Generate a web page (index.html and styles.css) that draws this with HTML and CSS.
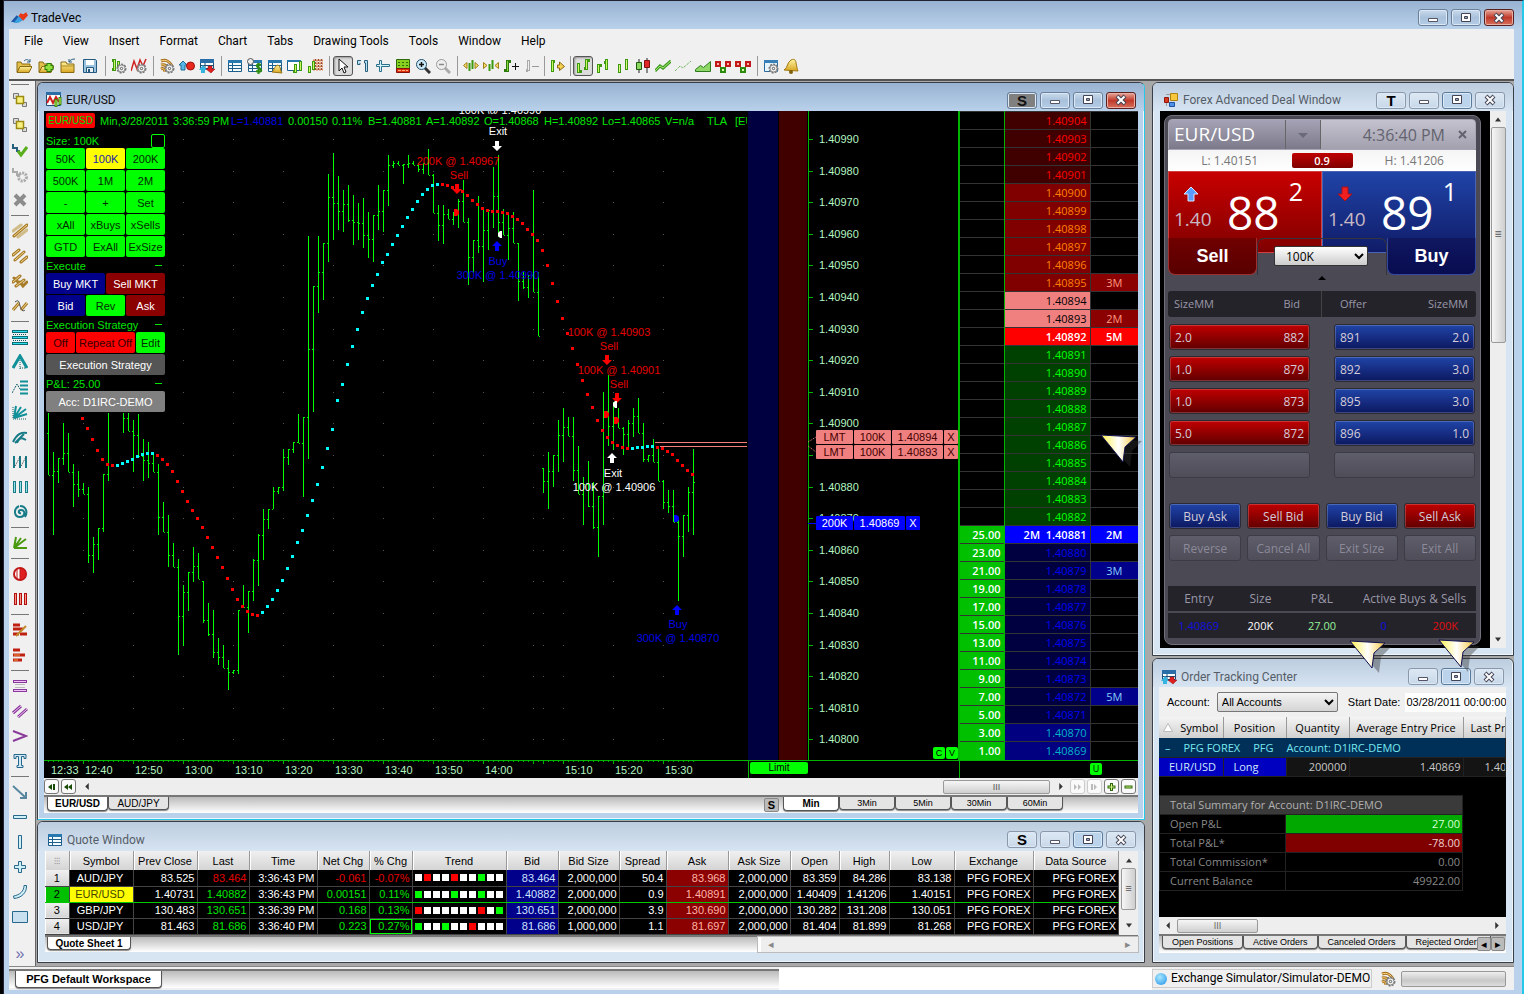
FILE: index.html
```
<!DOCTYPE html>
<html lang="en">
<head>
  <meta charset="UTF-8">
  <meta name="viewport" content="width=device-width, initial-scale=1">
  <title>TradeVec</title>
  <link rel="stylesheet" href="styles.css">
</head>
<body>

<svg class="defs" aria-hidden="true">
  <defs>
    <linearGradient id="gold" x1="0" y1="0" x2="0" y2="1"><stop offset="0" stop-color="#fdf3a0"/><stop offset="1" stop-color="#d9a520"/></linearGradient>
    <linearGradient id="cream" x1="0" y1="0" x2="1" y2="0"><stop offset="0" stop-color="#fff04a"/><stop offset=".5" stop-color="#fff"/><stop offset="1" stop-color="#f5c842"/></linearGradient>
  </defs>
  <symbol id="gear" viewBox="0 0 16 16"><circle cx="10.500" cy="10.500" r="4" fill="#f4f4f4" stroke="#777" stroke-width="2" stroke-dasharray="2 1"/><circle cx="10.500" cy="10.500" r="3.500" fill="#f4f4f4" stroke="#888"/><circle cx="10.500" cy="10.500" r="1.200" fill="#fff" stroke="#555"/></symbol>
  <symbol id="bar2" viewBox="0 0 16 16"><path d="M2 6.500h3M3.500 5v10M3.500 13.500H7M9 10.500h3M11.500 1v11M11.500 2.500H15" stroke="#3d9a10" stroke-width="3" fill="none"/><path d="M3.500 6v8M11.500 2v9" stroke="#c8f860" fill="none"/></symbol>
  <symbol id="sheet" viewBox="0 0 16 16"><path d="M1.500 2.500h13v11h-13z" fill="#f4fbff" stroke="#1d5f8a"/><path d="M1 2h14v3H1z" fill="#2878b0"/><path d="M2 7.500h12M2 10.500h12M5.500 5v8" stroke="#1d5f8a"/></symbol>
  <symbol id="folder" viewBox="0 0 16 16"><path d="M1 14V4h4l1 2h8v2" fill="#e2c04a" stroke="#8a6a12"/><path d="M1 14.500L4 8.500h12l-3 6z" fill="url(#gold)" stroke="#8a6a12"/></symbol>
  <symbol id="i-open" viewBox="0 0 16 16"><use href="#folder"/><path d="M8 3c2-2 4-2 6 1M14 1v3h-3" fill="none" stroke="#2a6080"/></symbol>
  <symbol id="i-add" viewBox="0 0 16 16"><use href="#folder"/><path d="M11 5v9M6.500 9.500h9" stroke="#2c7a0c" stroke-width="5"/><path d="M11 6v7M7.500 9.500h7" stroke="#8fe03c" stroke-width="3"/></symbol>
  <symbol id="i-close" viewBox="0 0 16 16"><path d="M1 4h5l1 2h7v8.500H1z" fill="url(#gold)" stroke="#8a6a12"/><path d="M1 8h13" stroke="#b08a20"/><path d="M15 1c-3 0-5 1-6 3M9 1v3h3" fill="none" stroke="#2a6080"/></symbol>
  <symbol id="i-save" viewBox="0 0 16 16"><path d="M1.500 1.500h12l1 1v12h-13z" fill="#9cc4de" stroke="#255a80"/><path d="M4 2h8v5H4z" fill="#fff"/><path d="M4.500 9.500h7v5h-7z" fill="#e8eef2" stroke="#255a80"/><path d="M6 11h2v3H6z" fill="#255a80"/></symbol>
  <symbol id="i-bargear" viewBox="0 0 16 16"><path d="M1 2.500h2M3.500 1v12M1 11.500h2M7.500 3v6" stroke="#3d9a10" stroke-width="3"/><path d="M3.500 2v10M7.500 4v5" stroke="#c8f860"/><use href="#gear"/></symbol>
  <symbol id="i-wavegear" viewBox="0 0 16 16"><path d="M0 13L3 3l3 8 3-9 3 6 3-7" fill="none" stroke="#d02020" stroke-width="1.500"/><use href="#gear"/></symbol>
  <symbol id="i-feed" viewBox="0 0 16 16"><path d="M2 3c5-2 9 1 11 5M2 7c4-1 6 1 7 4M2 11c2-1 4 0 4 3" fill="none" stroke="#a87020" stroke-width="3"/><path d="M2 3c5-2 9 1 11 5M2 7c4-1 6 1 7 4M2 11c2-1 4 0 4 3" fill="none" stroke="#fcd880"/><use href="#gear"/></symbol>
  <symbol id="i-updot" viewBox="0 0 16 16"><path d="M0 7l4-4 4 4H6v5H2V7z" fill="#59b8e8" stroke="#1a6a9a"/><circle cx="11.500" cy="8" r="4" fill="#e8281c" stroke="#9a1010"/></symbol>
  <symbol id="i-orders" viewBox="0 0 16 16"><path d="M1.500 1.500h13v9h-13z" fill="#fff" stroke="#1d4f7a"/><path d="M1 1h14v4H1z" fill="#2a6ea8"/><path d="M6 5v5M2 7.500h12" stroke="#1d4f7a"/><path d="M0 12l4-5 4 5H6v3H2v-3z" fill="#35b4e0"/><path d="M7 11h2V8h4v3h3l-4 4z" fill="#e02020" stroke="#901010" stroke-width=".5"/></symbol>
  <symbol id="i-dollar" viewBox="0 0 16 16"><use href="#sheet"/><circle cx="3.500" cy="3.500" r="3" fill="#eee" stroke="#555"/><path d="M14 7c-4-2-6 1-2 3s2 5-3 3M11.500 5v11" fill="none" stroke="#2c8a10" stroke-width="2"/></symbol>
  <symbol id="i-sheetbell" viewBox="0 0 16 16"><use href="#sheet"/><path d="M5 14c2-1 2-6 6-7 3 1 2 6 4 8z" fill="url(#gold)" stroke="#9a7410"/></symbol>
  <symbol id="i-sheetbar" viewBox="0 0 16 16"><path d="M.500 2.500h13v10H.500z" fill="#fff" stroke="#1d5f8a"/><path d="M0 2h14v2H0z" fill="#2878b0"/><path d="M8.500 6v9M13.500 3v10M6 13.500h2" stroke="#3d9a10" stroke-width="3"/><path d="M8.500 7v7M13.500 4v8" stroke="#c8f860"/></symbol>
  <symbol id="i-heat" viewBox="0 0 16 16"><path d="M6 2.500h10M6 5.500h10M6 8.500h10M6 11.500h10" stroke="#d88a58" stroke-width="2" stroke-dasharray="2 1"/><path d="M8.500 1v12M11.500 1v12M14.500 1v12" stroke="#9a4a3a" stroke-dasharray="2 1"/><path d="M2.500 8v7M6.500 3v9" stroke="#3d9a10" stroke-width="3"/><path d="M2.500 9v5M6.500 4v7" stroke="#c8f860"/></symbol>
  <symbol id="i-cursor" viewBox="0 0 16 16"><path d="M4 1v12l3-3 2 5 2-1-2-5h4z" fill="#fff" stroke="#111"/></symbol>
  <symbol id="i-cursorg" viewBox="0 0 16 16"><path d="M6 2.500H2.500v4H5V5M9.500 2.500h3v11h-2V5h-1z" fill="#b9dff0" stroke="#28607c"/></symbol>
  <symbol id="i-tcross" viewBox="0 0 16 16"><path d="M4.500 2.500h2v4h8v2h-8v5h-2v-5h-3v-2h3z" fill="#d8f0f8" stroke="#28708c"/></symbol>
  <symbol id="i-keypad" viewBox="0 0 16 16"><path d="M1.500 1.500h13v9h-13z" fill="#8ad020" stroke="#2c6a08"/><path d="M3 4.500h10M3 7.500h10" stroke="#2c6a08" stroke-dasharray="2 2"/><path d="M1.500 10.500h13v4h-13z" fill="#e03010" stroke="#801008"/><path d="M3 12.500h10" stroke="#ffb070" stroke-dasharray="3 1"/></symbol>
  <symbol id="i-zoomin" viewBox="0 0 16 16"><path d="M10 10l5 5" stroke="#333" stroke-width="3"/><circle cx="6.500" cy="6.500" r="5" fill="#cdeaf8" stroke="#22506a"/><path d="M4 6.500h5M6.500 4v5" stroke="#111" stroke-width="1.500"/></symbol>
  <symbol id="i-zoomout" viewBox="0 0 16 16"><path d="M10 10l5 5" stroke="#aaa" stroke-width="3"/><circle cx="6.500" cy="6.500" r="5" fill="#eee" stroke="#999"/><path d="M4 6.500h5" stroke="#888" stroke-width="1.500"/></symbol>
  <symbol id="i-widen" viewBox="0 0 16 16"><path d="M4 4.500v6l-3.500-3zM12 4.500v6l3.500-3z" fill="#f4d868" stroke="#a08018"/><path d="M6.500 5v8M9.500 2v9" stroke="#3d9a10" stroke-width="2"/></symbol>
  <symbol id="i-narrow" viewBox="0 0 16 16"><path d="M.500 4.500v6L4 7.500zM15.500 4.500v6L12 7.500z" fill="#f4d868" stroke="#a08018"/><path d="M6.500 6v7M9.500 2v9" stroke="#3d9a10" stroke-width="2"/></symbol>
  <symbol id="i-barplus" viewBox="0 0 16 16"><path d="M4.500 2v12M1 12.500h3M4 3.500h4" stroke="#2c7a0c" stroke-width="3"/><path d="M4.500 3v10" stroke="#8ad840"/><path d="M9 8.500h7M12.500 5v7" stroke="#111"/></symbol>
  <symbol id="i-barminus" viewBox="0 0 16 16"><path d="M5.500 2v11M3 12.500h2" stroke="#aaa" stroke-width="3"/><path d="M5.500 3v9" stroke="#eee"/><path d="M9 8.500h7" stroke="#999"/></symbol>
  <symbol id="i-shift" viewBox="0 0 16 16"><path d="M3.500 2v12M4 3.500h2" stroke="#3d9a10" stroke-width="3"/><path d="M3.500 3v10" stroke="#c8f860"/><path d="M8.500 7h2V4l5 4.500-5 4V10h-2z" fill="#f4d050" stroke="#8a6a12"/></symbol>
  <symbol id="i-bar1" viewBox="0 0 16 16"><path d="M3.500 6v9M11.500 1v11M3.500 7.500H7M9 4.500h2" stroke="#3d9a10" stroke-width="3"/><path d="M3.500 7v7M11.500 2v9" stroke="#c8f860"/></symbol>
  <symbol id="i-hl" viewBox="0 0 16 16"><path d="M4.500 6v9M11.500 1v11" stroke="#3d9a10" stroke-width="3"/><path d="M4.500 7v7M11.500 2v9" stroke="#d8f880"/></symbol>
  <symbol id="i-candle" viewBox="0 0 16 16"><path d="M4 1v14M12 0v15" stroke="#222"/><path d="M1.500 4.500h5v7h-5z" fill="#8ad860" stroke="#1c5a0c"/><path d="M9.500 2.500h5v7h-5z" fill="#e02828" stroke="#801010"/></symbol>
  <symbol id="i-line" viewBox="0 0 16 16"><path d="M0 13l5-5 3 2 8-7" fill="none" stroke="#3d9a20" stroke-width="3"/><path d="M0 13l5-5 3 2 8-7" fill="none" stroke="#a8e870"/></symbol>
  <symbol id="i-dots" viewBox="0 0 16 16"><path d="M0 13l5-5 3 2 8-7" fill="none" stroke="#3da020" stroke-dasharray="1 1"/></symbol>
  <symbol id="i-area" viewBox="0 0 16 16"><path d="M.500 13.500v-2l5-4 3 2 7-6v10z" fill="#8fd868" stroke="#2c7a1c"/></symbol>
  <symbol id="i-pnf" viewBox="0 0 16 16"><path d="M1 4h4v4H1zM11 4h4v4h-4z" fill="#ffb0a0" stroke="#c01818" stroke-width="2"/><path d="M6 10h4v4H6z" fill="#d0ffb0" stroke="#2c8a0c" stroke-width="2"/></symbol>
  <symbol id="i-wingear" viewBox="0 0 16 16"><path d="M1.500 2.500h13v11h-13z" fill="#e8f4fc" stroke="#28689a"/><path d="M1 2h14v3H1z" fill="#3a80b8"/><use href="#gear"/></symbol>
  <symbol id="i-bell" viewBox="0 0 16 16"><path d="M1 12c4-2 3-8 7-10 4-2 5 1 5 3 1 4 1 6 2 8z" fill="url(#gold)" stroke="#a07810"/><circle cx="8" cy="14" r="2" fill="#806008"/></symbol>
  <symbol id="i-chart" viewBox="0 0 16 16"><path d="M.500.500h14v13H.500z" fill="#fff" stroke="#1d4f7a"/><path d="M0 0h15v3H0z" fill="#2a6ea8"/><path d="M1 11l3-6 3 6 3-6 3 5" fill="none" stroke="#d02020" stroke-width="2"/><path d="M10 7v8M14 5v8" stroke="#3d8a10" stroke-width="3"/><path d="M10 8v6M14 6v6" stroke="#b6f04a"/></symbol>
  <symbol id="i-form" viewBox="0 0 16 16"><path d="M7.500 1.500h7v7h-7z" fill="#f8c83c" stroke="#b08010"/><path d="M1.500 5.500h4v5h-4z" fill="#d83820" stroke="#901808"/><path d="M6.500 10.500h5v4h-5z" fill="#5090e8" stroke="#2050a0"/><path d="M3 2.500h4M3.500 11v3" stroke="#999"/></symbol>
  <symbol id="l-pos" viewBox="0 0 16 16"><path d="M1.500 1.500h5v5h-5zM10.500 10.500h4v4h-4z" fill="#ddd" stroke="#777"/><path d="M4.500 4.500h7v7h-7z" fill="#f8f080" stroke="#9a8a10" stroke-width="1.500"/></symbol>
  <symbol id="l-check" viewBox="0 0 16 16"><path d="M1 2v4h4v3h3" fill="none" stroke="#286080" stroke-width="2"/><path d="M6 9l3 4 6-8" fill="none" stroke="#5aae1c" stroke-width="3"/></symbol>
  <symbol id="l-ggear" viewBox="0 0 16 16"><path d="M1 1v4h4v3h3" fill="none" stroke="#aaa" stroke-width="2"/><circle cx="10.500" cy="10" r="4" fill="none" stroke="#aaa" stroke-width="3" stroke-dasharray="2 1"/></symbol>
  <symbol id="l-x" viewBox="0 0 16 16"><path d="M3 3l10 10M13 3L3 13" stroke="#8c8c8c" stroke-width="4"/></symbol>
  <symbol id="l-ray" viewBox="0 0 16 16"><path d="M1 8l8-6M6 14l9-7" stroke="#d0bc88" stroke-width="3" stroke-linecap="round"/><path d="M2 13L15 2" stroke="#a87c28" stroke-width="3" stroke-linecap="round"/><path d="M2 13L15 2" stroke="#f0d890"/></symbol>
  <symbol id="l-lines" viewBox="0 0 16 16"><path d="M1 7l6-5M3 12L12 4M9 14l6-5" stroke="#a87c28" stroke-width="3" stroke-linecap="round"/><path d="M1 7l6-5M3 12L12 4M9 14l6-5" stroke="#f0d890"/></symbol>
  <symbol id="l-gann" viewBox="0 0 16 16"><path d="M2 5l4 4M1 9l7-6M4 13l8-6M8 9l3 4 4-4" stroke="#a87c28" stroke-width="3" fill="none" stroke-linecap="round"/><path d="M1 9l7-6M4 13l8-6" stroke="#f0d890"/></symbol>
  <symbol id="l-curve" viewBox="0 0 16 16"><path d="M1 12L7 5M9 12l6-7" stroke="#a87c28" stroke-width="3" fill="none"/><path d="M1 12L7 5M9 12l6-7" stroke="#f0d890"/><path d="M3 4c4-3 4 0 5 4s3 6 5 4" stroke="#444" fill="none"/></symbol>
  <symbol id="l-fib" viewBox="0 0 16 16"><path d="M0 2.500h16M0 8.500h16M0 14.500h16" stroke="#0c6c76" stroke-width="3"/><path d="M1 2.500h14M1 8.500h14M1 14.500h14" stroke="#30e0ec"/><path d="M1 5.500h14M1 11.500h14" stroke="#0c5c66" stroke-dasharray="1 1"/></symbol>
  <symbol id="l-peak" viewBox="0 0 16 16"><path d="M1 14L8 2l7 12" fill="none" stroke="#109098" stroke-width="3"/><path d="M8 6v9M8 14h6" stroke="#0c5c66" stroke-dasharray="1 1"/></symbol>
  <symbol id="l-ext" viewBox="0 0 16 16"><path d="M8 2.500h8M8 6.500h8M8 10.500h8M8 14.500h8" stroke="#109098" stroke-width="2"/><path d="M0 14l5-9 3 5" fill="none" stroke="#0c5c66" stroke-dasharray="2 1"/></symbol>
  <symbol id="l-fan" viewBox="0 0 16 16"><path d="M2 14L4 2M2 14L9 3M2 14l12-9M2 14l13-4" stroke="#109098" stroke-width="2"/><path d="M1 3v12h14" fill="none" stroke="#0c5c66" stroke-dasharray="1 1"/></symbol>
  <symbol id="l-arc" viewBox="0 0 16 16"><path d="M1 13C5 5 9 3 15 4M5 14c2-5 4-6 9-3M3 14L12 5" fill="none" stroke="#187c88" stroke-width="2"/></symbol>
  <symbol id="l-vert" viewBox="0 0 16 16"><path d="M2 2v12M8 2v12M14 2v12" stroke="#187c88" stroke-width="2"/><path d="M3 12L8 3M9 12l5-9" stroke="#333" stroke-dasharray="1 1"/></symbol>
  <symbol id="l-cycle" viewBox="0 0 16 16"><path d="M2.500 2v12M8.500 2v12M14.500 2v12" stroke="#187c88" stroke-width="3"/><path d="M2.500 3v10M8.500 3v10M14.500 3v10" stroke="#98e0e8"/></symbol>
  <symbol id="l-spiral" viewBox="0 0 16 16"><path d="M9 9c-3 1-3-3 0-3 5 0 4 7-1 7C2 13 1 5 7 2M8 2c6 0 8 6 5 11" fill="none" stroke="#187c88" stroke-width="2"/></symbol>
  <symbol id="l-gfan" viewBox="0 0 16 16"><path d="M2 13L4 2M2 13L9 3M2 13l12-9M2 13h13" stroke="#4a9a10" stroke-width="2"/></symbol>
  <symbol id="l-rcirc" viewBox="0 0 16 16"><circle cx="8" cy="8" r="6" fill="#fff" stroke="#c01818" stroke-width="2"/><path d="M8 2a6 6 0 010 12zM5 3v10" fill="#e02020" stroke="#c01818"/></symbol>
  <symbol id="l-rbars" viewBox="0 0 16 16"><path d="M3.500 2v12M8.500 2v12M13.500 2v12" stroke="#b01010" stroke-width="3"/><path d="M3.500 3v10M8.500 3v10M13.500 3v10" stroke="#ff9080"/></symbol>
  <symbol id="l-rh1" viewBox="0 0 16 16"><path d="M1 3h7M1 7h10M1 12h6M8 12h7" stroke="#c02010" stroke-width="3"/><path d="M4 14L14 4" stroke="#c08828" stroke-width="2"/></symbol>
  <symbol id="l-rh2" viewBox="0 0 16 16"><path d="M1 3h7M1 8h12M1 13h9" stroke="#c02010" stroke-width="3"/><path d="M2 8h6M2 13h4" stroke="#f0a040"/></symbol>
  <symbol id="l-chan" viewBox="0 0 16 16"><path d="M1 3.500h14M1 12.500h14" stroke="#8a3a9a" stroke-width="3"/><path d="M2 3.500h12M2 12.500h12" stroke="#f0c0f8"/><path d="M3 6.500h10M3 9.500h10" stroke="#bbb"/></symbol>
  <symbol id="l-pchan" viewBox="0 0 16 16"><path d="M1 10l8-7M6 14l9-8" stroke="#8a3a9a" stroke-width="3"/><path d="M1 10l8-7M6 14l9-8" stroke="#f0c0f8"/></symbol>
  <symbol id="l-wedge" viewBox="0 0 16 16"><path d="M1 3l13 5-13 5" fill="none" stroke="#8a3a9a" stroke-width="2"/></symbol>
  <symbol id="l-text" viewBox="0 0 16 16"><path d="M2 1.500h12v4h-2v-2H9.500v9H11v2H5v-2h1.500v-9H4v2H2z" fill="#d0e8f4" stroke="#28688c"/></symbol>
  <symbol id="l-arrow" viewBox="0 0 16 16"><path d="M1 2l12 11M14 8v6H8" fill="none" stroke="#5888a0" stroke-width="2"/></symbol>
  <symbol id="l-hline" viewBox="0 0 16 16"><path d="M1.500 6.500h13v3h-13z" fill="#d0f0f8" stroke="#28688c"/></symbol>
  <symbol id="l-vline" viewBox="0 0 16 16"><path d="M6.500 1.500h3v13h-3z" fill="#d0f0f8" stroke="#28688c"/></symbol>
  <symbol id="l-plus" viewBox="0 0 16 16"><path d="M6.500 2.500h3v4h4v3h-4v4h-3v-4h-4v-3h4z" fill="#d0f0f8" stroke="#28688c"/></symbol>
  <symbol id="l-sweep" viewBox="0 0 16 16"><path d="M12 1.500h2.500C15 9 9 14 2 14.500L1.500 12C8 11 12 7 12 1.500z" fill="#d0f0f8" stroke="#28688c"/></symbol>
  <symbol id="l-rect" viewBox="0 0 16 16"><path d="M.500 2.500h15v11H.500z" fill="#c8e0f0" stroke="#28688c"/></symbol>
  <symbol id="w-min" viewBox="0 0 16 12"><path d="M3.500 6.500h9v3h-9z" fill="#fff" stroke="#556"/></symbol>
  <symbol id="w-max" viewBox="0 0 16 12"><path d="M3.500 1.500h9v8h-9z" fill="#fff" stroke="#445"/><path d="M6.500 4.500h3v2h-3z" fill="#9ab" stroke="#445"/></symbol>
  <symbol id="w-x" viewBox="0 0 16 12"><path d="M4 2l8 8M12 2l-8 8" stroke="#445" stroke-width="4"/><path d="M4.500 2.500l7 7M11.500 2.500l-7 7" stroke="#fff" stroke-width="2"/></symbol>
  <symbol id="pointer" viewBox="0 0 42 38"><path d="M5 4l37 3-10 10-2 16z" fill="#333" opacity=".4"/><path d="M1 1l35 2-11 10-2 15z" fill="url(#cream)" stroke="#101050" stroke-width="1"/></symbol>
</svg>

<div class="app">
  <header class="titlebar">
    <svg class="logo" viewBox="0 0 18 14"><path d="M0 11L6 4l4 3-4 5z" fill="#1c58a8"/><path d="M3 12l6-8 4 5-5 3z" fill="#38a0e0"/><path d="M8 5l2-3 3 1 3-2 2 3-5 6z" fill="#e83818"/></svg>
    <h1>TradeVec</h1>
    <div class="wbtns">
      <button class="wb" aria-label="Minimize"><svg><use href="#w-min"/></svg></button>
      <button class="wb" aria-label="Restore"><svg><use href="#w-max"/></svg></button>
      <button class="wb close" aria-label="Close"><svg><use href="#w-x"/></svg></button>
    </div>
  </header>

  <nav class="menu">
    <a href="#">File</a><a href="#">View</a><a href="#">Insert</a><a href="#">Format</a><a href="#">Chart</a><a href="#">Tabs</a><a href="#">Drawing Tools</a><a href="#">Tools</a><a href="#">Window</a><a href="#">Help</a>
  </nav>

  <div class="toolbar" id="toolbar"></div>

  <div class="main">
    <div class="sidebar" id="sidebar"></div>

    <div class="desk">
      <div class="col">

        <section class="win active">
          <div class="wtitle">
            <svg class="ico"><use href="#i-chart"/></svg><h2>EUR/USD</h2>
            <div class="wbtns">
              <button class="wb s dark">S</button>
              <button class="wb" aria-label="Minimize"><svg><use href="#w-min"/></svg></button>
              <button class="wb" aria-label="Restore"><svg><use href="#w-max"/></svg></button>
              <button class="wb close" aria-label="Close"><svg><use href="#w-x"/></svg></button>
            </div>
          </div>
          <div class="chart">
            <div class="plot">
              <svg id="plot" viewBox="44 111 915 667" preserveAspectRatio="xMinYMin slice">
                <clipPath id="clip"><path d="M44 111h703v667H44z"/></clipPath>
                <g id="grid"></g>
                <g id="bars"></g>
                <g id="avg"></g>
                <path d="M655 442.500h92M660 446.500h87" stroke="#f08080" stroke-width="1"/>
                <g id="marks" class="marks"></g>
                <path d="M748 111h30v649h-30z" fill="#000040"/>
                <path d="M779 111h28v649h-28z" fill="#400000"/>
                <path d="M44 760.500h915M808.500 111v649M748.500 760v18M958.500 111v649" stroke="#00b400"/>
                <path d="M808 442l8-5M808 446l8 6" stroke="#f08080" stroke-dasharray="1 1"/>
                <path d="M808 523.500h8" stroke="#00f"/>
                <g id="axis"></g>
                <g clip-path="url(#clip)">
                  <text class="w" x="500" y="114" text-anchor="middle">100K @ 1.40990</text>
                  <path d="M44 114h703v14H44z" fill="#000"/>
                  <text class="g" y="125"><tspan x="100">Min,3/28/2011</tspan><tspan x="173">3:36:59 PM</tspan><tspan x="231" class="b">L=1.40881</tspan><tspan x="288">0.00150</tspan><tspan x="332">0.11%</tspan><tspan x="368">B=1.40881</tspan><tspan x="426">A=1.40892</tspan><tspan x="484">O=1.40868</tspan><tspan x="544">H=1.40892</tspan><tspan x="602">Lo=1.40865</tspan><tspan x="665">V=n/a</tspan><tspan x="707">TLA</tspan><tspan x="735">[EUR/USD]</tspan></text>
                  <text class="w" x="498" y="135" text-anchor="middle">Exit</text>
                </g>
              </svg>
              <span class="symtag">EUR/USD</span>
              <div class="pad">
                <div class="lab"><label for="lock">Size: 100K</label><input type="checkbox" id="lock"></div>
                <div class="keys">
                  <button>50K</button><button class="on">100K</button><button>200K</button>
                  <button>500K</button><button>1M</button><button>2M</button>
                  <button>-</button><button>+</button><button>Set</button>
                  <button>xAll</button><button>xBuys</button><button>xSells</button>
                  <button>GTD</button><button>ExAll</button><button>ExSize</button>
                </div>
                <div class="lab"><span>Execute</span><i></i></div>
                <div class="keys two"><button class="buy">Buy MKT</button><button class="sell">Sell MKT</button></div>
                <div class="keys"><button class="buy">Bid</button><button>Rev</button><button class="sell">Ask</button></div>
                <div class="lab"><span>Execution Strategy</span><i></i></div>
                <div class="keys strat"><button class="red">Off</button><button class="red">Repeat Off</button><button>Edit</button></div>
                <div class="keys one"><button class="gray">Execution Strategy</button></div>
                <div class="lab"><span>P&amp;L: 25.00</span><i></i></div>
                <div class="keys one"><button class="lgray">Acc: D1IRC-DEMO</button></div>
              </div>
              <div class="orders">
                <div class="order"><span>LMT</span><span>100K</span><span>1.40894</span><button>X</button></div>
                <div class="order"><span>LMT</span><span>100K</span><span>1.40893</span><button>X</button></div>
              </div>
              <div class="order position"><span>200K</span><span>1.40869</span><button>X</button></div>
              <div class="cv"><button>C</button><button>V</button></div>
              <button class="limit">Limit</button>
            </div>
            <div class="dom">
              <table class="ladder"><tbody id="ladder"></tbody></table>
              <div class="domfoot"><button>U</button></div>
            </div>
          </div>
          <div class="hscroll">
            <button class="nav" aria-label="First"><svg viewBox="0 0 9 8"><path d="M5 1v6L1 4zM6 1h2v6H6z" fill="#184a08"/></svg></button><button class="nav" aria-label="Back"><svg viewBox="0 0 9 8"><path d="M4 1v6L0 4zM8 1v6L4 4z" fill="#184a08"/></svg></button>
            <svg class="tri l" viewBox="0 0 6 8"><path d="M5 0v8L1 4z"/></svg>
            <span class="track"></span><span class="thumb">III</span>
            <svg class="tri" viewBox="0 0 6 8"><path d="M1 0v8l4-4z"/></svg>
            <button class="nav off" aria-label="Forward"><svg viewBox="0 0 9 8"><path d="M1 1v6l3-3zM5 1v6l3-3z" fill="#bbb"/></svg></button><button class="nav off" aria-label="Last"><svg viewBox="0 0 9 8"><path d="M1 1h2v6H1zM4 1v6l3-3z" fill="#bbb"/></svg></button><button class="nav" aria-label="Zoom in"><svg viewBox="0 0 9 8"><path d="M4.500 0v8M.500 4h8" stroke="#2c6a08" stroke-width="3"/><path d="M4.500 1v6M1.500 4h6" stroke="#d0f080"/></svg></button><button class="nav" aria-label="Zoom out"><svg viewBox="0 0 9 8"><path d="M.500 4h8" stroke="#2c6a08" stroke-width="3"/><path d="M1.500 4h6" stroke="#d0f080"/></svg></button>
          </div>
          <div class="tabs charttabs">
            <button class="tab cur">EUR/USD</button><button class="tab">AUD/JPY</button>
            <span class="fill"></span>
            <button class="sbtn">S</button>
            <button class="tab cur iv">Min</button><button class="tab iv">3Min</button><button class="tab iv">5Min</button><button class="tab iv">30Min</button><button class="tab iv">60Min</button>
            <span class="end"></span>
          </div>
          <svg class="ptr p1"><use href="#pointer"/></svg>
        </section>

        <section class="win quote">
          <div class="wtitle">
            <svg class="ico"><use href="#sheet"/></svg><h2>Quote Window</h2>
            <div class="wbtns">
              <button class="wb s">S</button>
              <button class="wb" aria-label="Minimize"><svg><use href="#w-min"/></svg></button>
              <button class="wb hot" aria-label="Restore"><svg><use href="#w-max"/></svg></button>
              <button class="wb" aria-label="Close"><svg><use href="#w-x"/></svg></button>
            </div>
          </div>
          <div class="qbody">
            <table class="quotes">
              <colgroup><col class="c24"><col class="c64"><col class="c64"><col class="c52"><col class="c68"><col class="c52"><col class="c43"><col class="c94"><col class="c52"><col class="c61"><col class="c47"><col class="c62"><col class="c62"><col class="c49"><col class="c50"><col class="c65"><col class="c79"><col></colgroup>
              <thead><tr><th class="grip">⁝⁝⁝</th><th>Symbol</th><th>Prev Close</th><th>Last</th><th>Time</th><th>Net Chg</th><th>% Chg</th><th>Trend</th><th>Bid</th><th>Bid Size</th><th>Spread</th><th>Ask</th><th>Ask Size</th><th>Open</th><th>High</th><th>Low</th><th>Exchange</th><th>Data Source</th></tr></thead>
              <tbody id="quotes"></tbody>
            </table>
            <div class="vscroll"><svg class="tri" viewBox="0 0 8 6"><path d="M1 5h6L4 1z"/></svg><span class="vthumb">≡</span><span class="vfill"></span><svg class="tri" viewBox="0 0 8 6"><path d="M1 1h6L4 5z"/></svg></div>
          </div>
          <div class="tabs qtabs">
            <button class="tab cur">Quote Sheet 1</button><span class="fill"></span>
            <div class="qscroll"><span>◂</span><span>▸</span></div>
          </div>
        </section>
      </div>

      <div class="col right">
        <section class="win deal">
          <div class="wtitle">
            <svg class="ico"><use href="#i-form"/></svg><h2>Forex Advanced Deal Window</h2>
            <div class="wbtns">
              <button class="wb s">T</button>
              <button class="wb" aria-label="Minimize"><svg><use href="#w-min"/></svg></button>
              <button class="wb hot" aria-label="Restore"><svg><use href="#w-max"/></svg></button>
              <button class="wb" aria-label="Close"><svg><use href="#w-x"/></svg></button>
            </div>
          </div>
          <div class="dbody">
            <div class="dwrap">
              <div class="dpanel">
                <div class="dhead"><strong>EUR/USD</strong><button class="dd" aria-label="Choose pair"><svg viewBox="0 0 12 7"><path d="M1 1h10L6 6z" fill="#6a6a78"/></svg></button><div class="clock"><time>4:36:40 PM</time><button aria-label="Close pair"><svg viewBox="0 0 9 9"><path d="M1 1l7 7M8 1L1 8" stroke="#63636f" stroke-width="2"/></svg></button></div></div>
                <div class="range"><span>L: 1.40151</span><b>0.9</b><span>H: 1.41206</span></div>
                <div class="tiles">
                  <div class="tile r"><div class="lead"><svg viewBox="0 0 16 16"><path d="M8 1l7 7h-4v7H5V8H1z" fill="#5a9cff" stroke="#d8e8ff"/></svg><span>1.40</span></div><b>88</b><sup>2</sup></div>
                  <div class="tile b"><div class="lead"><svg viewBox="0 0 16 16"><path d="M8 15l7-7h-4V1H5v7H1z" fill="#f02020" stroke="#a01020"/></svg><span>1.40</span></div><b>89</b><sup>1</sup></div>
                </div>
                <div class="act"><button class="bsell">Sell</button><label class="size"><select aria-label="Size"><option>100K</option></select></label><button class="bbuy">Buy</button></div>
                <svg class="fold" viewBox="0 0 8 4"><path d="M0 4h8L4 0z"/></svg>
                <div class="depthhead"><div><span>SizeMM</span><span>Bid</span></div><div><span>Offer</span><span>SizeMM</span></div></div>
                <div class="depth">
                  <button class="r"><span>2.0</span><span>882</span></button><button class="b"><span>891</span><span>2.0</span></button>
                  <button class="r"><span>1.0</span><span>879</span></button><button class="b"><span>892</span><span>3.0</span></button>
                  <button class="r"><span>1.0</span><span>873</span></button><button class="b"><span>895</span><span>3.0</span></button>
                  <button class="r"><span>5.0</span><span>872</span></button><button class="b"><span>896</span><span>1.0</span></button>
                  <button disabled aria-label="No bid"></button><button disabled aria-label="No offer"></button>
                </div>
                <div class="cmds">
                  <button class="b">Buy Ask</button><button class="r">Sell Bid</button><button class="b">Buy Bid</button><button class="r">Sell Ask</button>
                  <button disabled>Reverse</button><button disabled>Cancel All</button><button disabled>Exit Size</button><button disabled>Exit All</button>
                </div>
                <table class="pos">
                  <thead><tr><th>Entry</th><th>Size</th><th>P&amp;L</th><th colspan="2">Active Buys &amp; Sells</th></tr></thead>
                  <tbody><tr><td class="blue">1.40869</td><td class="white">200K</td><td class="lime">27.00</td><td class="blue">0</td><td class="rd">200K</td></tr></tbody>
                </table>
              </div>
            </div>
            <div class="vscroll big"><svg class="tri" viewBox="0 0 8 6"><path d="M1 5h6L4 1z"/></svg><span class="vthumb">≡</span><span class="vfill"></span><svg class="tri" viewBox="0 0 8 6"><path d="M1 1h6L4 5z"/></svg></div>
          </div>
          <svg class="ptr p2"><use href="#pointer"/></svg>
          <svg class="ptr p3"><use href="#pointer"/></svg>
        </section>

        <section class="win otc">
          <div class="wtitle">
            <svg class="ico"><use href="#i-orders"/></svg><h2>Order Tracking Center</h2>
            <div class="wbtns">
              <button class="wb" aria-label="Minimize"><svg><use href="#w-min"/></svg></button>
              <button class="wb hot" aria-label="Restore"><svg><use href="#w-max"/></svg></button>
              <button class="wb" aria-label="Close"><svg><use href="#w-x"/></svg></button>
            </div>
          </div>
          <div class="filter"><label for="acct">Account:</label><select id="acct"><option>All Accounts</option></select><label for="start">Start Date:</label><input id="start" type="text" value="03/28/2011 00:00:00"></div>
          <div class="obody">
            <table class="otable">
              <colgroup><col class="c64"><col class="c63"><col class="c63"><col class="c114"><col></colgroup>
              <thead><tr><th class="sort"><svg viewBox="0 0 10 9"><path d="M.500 8.500h9L5 .500z" fill="#fff" stroke="#bbb"/></svg>Symbol</th><th>Position</th><th>Quantity</th><th>Average Entry Price</th><th class="last">Last Price</th></tr></thead>
              <tbody>
                <tr class="grp"><td colspan="5"><span>–</span><span>PFG FOREX</span><span>PFG</span><span>Account: D1IRC-DEMO</span></td></tr>
                <tr class="row"><td class="hl">EUR/USD</td><td class="hl">Long</td><td>200000</td><td>1.40869</td><td class="last">1.40881</td></tr>
              </tbody>
            </table>
            <table class="sum">
              <colgroup><col class="c126"><col></colgroup>
              <tbody>
                <tr><th colspan="2" class="cap">Total Summary for Account: D1IRC-DEMO</th></tr>
                <tr><th>Open P&amp;L</th><td class="up">27.00</td></tr>
                <tr><th>Total P&amp;L*</th><td class="dn">-78.00</td></tr>
                <tr><th>Total Commission*</th><td>0.00</td></tr>
                <tr><th>Current Balance</th><td>49922.00</td></tr>
              </tbody>
            </table>
          </div>
          <div class="hscroll"><svg class="tri" viewBox="0 0 6 8"><path d="M5 0v8L1 4z"/></svg><span class="thumb">III</span><span class="track"></span><svg class="tri" viewBox="0 0 6 8"><path d="M1 0v8l4-4z"/></svg></div>
          <div class="tabs otabs"><button class="tab">Open Positions</button><button class="tab">Active Orders</button><button class="tab">Canceled Orders</button><button class="tab">Rejected Orders</button><span class="more"><button>◂</button><button>▸</button></span></div>
        </section>
      </div>
    </div>
  </div>

  <footer class="status">
    <div class="tabs wtabs"><button class="tab cur">PFG Default Workspace</button><span class="fill"></span></div>
    <div class="blank"></div>
    <div class="conn"><i></i>Exchange Simulator/Simulator-DEMO</div>
    <svg class="ico"><use href="#i-feed"/></svg>
    <div class="prog"></div>
  </footer>
</div>

<script src="script.js"></script>
</body>
</html>
```
FILE: styles.css
```
* { box-sizing: border-box; }
body {
  margin: 0;
  background: #000;
  font-family: "Liberation Sans", Arial, sans-serif;
  font-size: 11px;
  color: #000;
  overflow: hidden;
}
button, input, select { font: inherit; color: inherit; margin: 0; padding: 0; border: 0; background: none; border-radius: 0; white-space: nowrap; }
h1, h2 { margin: 0; font: 12px Roboto, sans-serif; }
table { border-collapse: collapse; table-layout: fixed; width: 100%; }
th { font-weight: normal; }
th, td { padding: 0; white-space: nowrap; overflow: hidden; }
.defs { position: absolute; width: 0; height: 0; }
.ico { width: 16px; height: 16px; flex: none; }

/* frame */
.app {
  height: 100vh;
  min-height: 900px;
  margin-left: 3px;
  display: flex;
  flex-direction: column;
  border: 1px solid #223;
  border-right: 2px solid #25c8e8;
  border-bottom: 0;
  background: #b9d1ea;
  padding: 0 8px 4px 5px;
}
.titlebar {
  height: 28px;
  display: flex;
  align-items: center;
  margin: 0 -8px 0 -5px;
  padding: 5px 8px 0 7px;
  background: linear-gradient(#98b2d1, #b9d1ea);
}
.titlebar h1 { flex: 1; }
.logo { width: 17px; height: 14px; margin-right: 3px; }
.wbtns { display: flex; gap: 3px; }
.wb {
  width: 30px;
  height: 17px;
  border: 1px solid #6a7f9a;
  border-radius: 3px;
  background: linear-gradient(#c9daec, #a9c1db 50%, #b5cce5);
  box-shadow: inset 0 0 0 1px #dbe8f5;
  display: flex;
  align-items: center;
  justify-content: center;
}
.wb svg { width: 16px; height: 12px; }
.wb.close { background: linear-gradient(#e8a898, #c0392b 50%, #d8705c); border-color: #5a2020; box-shadow: inset 0 0 0 1px #e8b0a4; }
.wb.s { font-size: 15px; font-weight: bold; }
.wb.dark { background: #808080; }
.menu {
  height: 24px;
  background: #f0f0f0;
  display: flex;
  align-items: center;
  gap: 20px;
  padding-left: 15px;
  font: 12px Roboto, sans-serif;
}
.menu a { color: #000; text-decoration: none; }
.toolbar {
  height: 28px;
  background: #f0f0f0;
  border-bottom: 2px solid #555;
  display: flex;
  align-items: center;
  padding-left: 4px;
}
.tb { width: 20px; height: 20px; display: flex; align-items: center; justify-content: center; flex: none; }
.tb svg { width: 16px; height: 16px; }
.tb.wide { width: 22px; }
.tb.on { border: 1px solid #555; border-radius: 3px; background: #dcdcdc; box-shadow: inset 1px 1px 2px #999; }
.tsep { width: 8px; height: 20px; flex: none; background: linear-gradient(#999, #999) center / 1px 100% no-repeat; }
.tsep.tight { width: 6px; }
.main { flex: 1; min-height: 0; display: flex; }
.sidebar { width: 26px; background: #f0f0f0; display: flex; flex-direction: column; align-items: center; padding: 0 4px 0 0; }
.sidebar button { width: 20px; height: 25px; display: flex; align-items: center; justify-content: center; flex: none; }
.sidebar svg { width: 16px; height: 16px; }
.lsep { width: 18px; height: 6px; flex: none; background: linear-gradient(#777, #777) center / 100% 1px no-repeat; }
.sidebar .chev { margin-top: auto; font-size: 16px; color: #7070b0; }
.desk {
  flex: 1;
  min-width: 0;
  background: #a9a9a9;
  border-left: 1px solid #666;
  display: grid;
  grid-template-columns: minmax(0, 1fr) 362px;
  gap: 7px;
  padding: 1px 0 3px 1px;
}
.col { display: flex; flex-direction: column; gap: 1px; min-height: 0; }
.col.right { gap: 2px; }

/* child windows */
.win {
  position: relative;
  border: 1px solid #3a3f47;
  border-radius: 6px 6px 0 0;
  background: #d7e4f2;
  box-shadow: inset 0 0 0 1px #eef5fb;
  padding: 0 6px 6px;
  display: flex;
  flex-direction: column;
}
.win.active { flex: 1; min-height: 0; background: #b9d1ea; border-right-color: #25c8e8; border-bottom-color: #25c8e8; }
.wtitle {
  height: 28px;
  flex: none;
  display: flex;
  align-items: center;
  gap: 4px;
  margin: 0 -6px;
  padding: 6px 8px 0 8px;
  border-radius: 5px 5px 0 0;
  background: linear-gradient(#bccddf, #d7e4f2);
  color: #555d68;
}
.wtitle h2 { flex: 1; white-space: nowrap; }
.active .wtitle { background: linear-gradient(#98b2d1, #b9d1ea); color: #111; }
.win:not(.active) .wb { background: linear-gradient(#dde8f3, #c8d8e9); border-color: #8a98aa; color: #000; }
.win:not(.active) .wb.hot { background: #bcd3ec; border-color: #5a7a9a; }

/* chart */
.chart { flex: 1; min-height: 0; display: grid; grid-template-columns: minmax(0, 1fr) 179px; background: #000; overflow: hidden; }
.plot { position: relative; overflow: hidden; }
#plot { display: block; width: 100%; height: 100%; font-size: 11px; }
#plot text { white-space: pre; }
.g { fill: #00e600; }
.w { fill: #fff; }
.b { fill: #0000e6; }
.r { fill: #e60000; }
.t { fill: #b4f5c0; }
.symtag { position: absolute; left: 2px; top: 2px; width: 49px; height: 15px; border-radius: 2px; background: #f00; color: #00d800; font-size: 10px; line-height: 15px; text-align: center; }
.pad { position: absolute; left: 2px; top: 22px; width: 119px; background: #000; color: #00e600; }
.lab { height: 15px; display: flex; align-items: center; justify-content: space-between; }
.lab i { width: 7px; height: 1px; background: #00e600; margin-right: 3px; }
.lab input { appearance: none; width: 14px; height: 14px; border: 1px solid #0f0; border-radius: 2px; }
.keys { display: grid; grid-template-columns: repeat(3, 1fr); gap: 1px; padding-bottom: 1px; }
.keys.two { grid-template-columns: 1fr 1fr; }
.keys.one { grid-template-columns: 1fr; }
.keys.strat { grid-template-columns: 29px 1fr 29px; }
.keys button { height: 21px; border-radius: 2px; background: #0f0; color: #002c00; }
.keys .on { background: #ff0; color: #22a; }
.keys .buy { background: #00008b; color: #fff; }
.keys .sell { background: #8b0000; color: #fff; }
.keys .red { background: #f00; color: #300; }
.keys .gray { background: #555; color: #fff; }
.keys .lgray { background: #808080; color: #fff; }
.orders { position: absolute; left: 772px; top: 319px; }
.order { display: grid; grid-template-columns: 37px 37px 51px 14px; gap: 1px; margin-bottom: 1px; text-align: center; line-height: 14px; color: #400; }
.order > * { background: #f08080; height: 14px; border-radius: 1px; }
.position { position: absolute; left: 772px; top: 405px; grid-template-columns: 37px 51px 14px; color: #fff; }
.position > * { background: #00f; }
.cv { position: absolute; right: 1px; top: 636px; display: flex; gap: 1px; }
.cv button, .domfoot button { width: 12px; height: 12px; border-radius: 2px; background: #0f0; font-size: 9px; line-height: 12px; }
.limit { position: absolute; left: 706px; top: 651px; width: 58px; height: 12px; border-radius: 2px; background: #0f0; font-size: 10px; line-height: 12px; }
.dom { border-left: 1px solid #00b400; font-family: "Open Sans", sans-serif; }
.ladder td { height: 18px; border-top: 1px solid #333; text-align: right; padding-right: 3px; line-height: 16px; }
.ladder td:nth-child(1) { width: 44px; border-right: 1px solid #00b400; }
.ladder td:nth-child(3) { width: 48px; border-left: 1px solid #333; text-align: center; padding: 0; }
.ladder .pl { background: #00c000; color: #fff; font-weight: 600; }
.z1 { background: #400000; color: #f00; }
.z2 { background: #800000; color: #ff8000; }
.z3 { background: #f08080; color: #000; }
.z4 { background: #f00; color: #fff; font-weight: 600; }
.z5 { background: #004000; color: #0f0; }
.z6 { background: #00f; color: #fff; font-weight: 600; }
.z7 { background: #000040; color: #0000f0; }
.z8 { background: #000080; color: #00b4c8; }
.ds { background: #8b0000; color: #ff9a80; }
.db { background: #00008b; color: #87cefa; }
.domfoot { border-top: 1px solid #00b400; padding: 1px 0 0 130px; line-height: 12px; }

/* scrollbars and tabs */
.hscroll { height: 17px; flex: none; display: flex; align-items: center; background: #eee; }
.hscroll .track { flex: 1; }
.thumb, .vthumb { border: 1px solid #999; border-radius: 2px; background: linear-gradient(#f6f6f6, #cfcfcf); color: #555; text-align: center; }
.thumb { width: 107px; height: 14px; font-size: 9px; line-height: 12px; margin-right: 2px; }
.nav { width: 15px; height: 15px; margin-right: 2px; border: 1px solid #777; border-radius: 3px; background: #fafafa; display: flex; align-items: center; justify-content: center; }
.nav svg { width: 9px; height: 8px; }
.nav.off { border-color: #ccc; }
.tri { width: 8px; height: 7px; flex: none; margin: 0 5px; fill: #333; }
.tabs { flex: none; display: flex; align-items: flex-start; border-top: 2px solid #777; background: linear-gradient(#bbb, #fff); }
.tab { height: 13px; border: 1px solid #555; border-top: 0; border-radius: 0 0 4px 4px; background: #e4e4e4; font-size: 10px; line-height: 11px; box-shadow: 0 1px 1px #888; }
.tab.cur { background: #fff; font-weight: bold; }
.fill { flex: 1; }
.charttabs { height: 18px; padding-left: 3px; }
.charttabs .tab { width: 61px; }
.charttabs .iv { width: 56px; font-size: 9px; }
.charttabs .cur { height: 14px; }
.charttabs .cur.iv { font-size: 10px; }
.charttabs .end { width: 75px; }
.sbtn { width: 15px; height: 14px; margin: 1px 4px 0 0; border: 1px solid #888; border-radius: 2px; background: #bbb; font-weight: bold; line-height: 12px; }

/* quotes */
.quote { height: 142px; padding-left: 7px; padding-bottom: 10px; }
.quote .wtitle { height: 29px; margin-left: -7px; padding-left: 9px; }
.qbody { display: flex; flex: 1; min-height: 0; background: #000; overflow: hidden; }
.quotes { flex: 1; }
.quotes th { height: 19px; background: linear-gradient(#f0f0f0, #d4d4d4); border-right: 1px solid #999; box-shadow: inset 1px 0 #fff; }
.quotes .grip { font-size: 9px; color: #999; }
.quotes tbody td, .quotes tbody th { height: 16px; border-right: 1px solid #444; border-bottom: 1px solid #444; line-height: 14px; }
.quotes td { text-align: right; padding-right: 2px; color: #fff; }
.quotes .sym { text-align: center; }
.quotes .up { color: #00e600; }
.quotes .down { color: #e60000; }
.quotes .bid { background: #00008b; color: #cfe4ff; }
.quotes .ask { background: #8b0000; color: #ffb4a8; }
.quotes .sel td, .quotes .sel th { border-bottom-color: #00c800; border-top: 1px solid #00c800; }
.quotes .sel th { background: #00c000; }
.quotes .sel .sym { background: #ff0; color: #440; }
.quotes .focus { box-shadow: inset 0 0 0 1px #0f0; }
.trend { display: flex; gap: 2px; padding-left: 2px; }
.trend i { width: 7px; height: 7px; background: #fff; }
.trend .u { background: #0f0; }
.trend .d { background: #f00; }
.c24 { width: 24px; } .c43 { width: 43px; } .c47 { width: 47px; } .c49 { width: 49px; } .c50 { width: 50px; }
.c52 { width: 52px; } .c61 { width: 61px; } .c62 { width: 62px; } .c63 { width: 63px; } .c64 { width: 64px; }
.c65 { width: 65px; } .c68 { width: 68px; } .c79 { width: 79px; } .c94 { width: 94px; } .c114 { width: 114px; } .c126 { width: 126px; }
.vscroll { width: 19px; flex: none; background: #eee; display: flex; flex-direction: column; align-items: center; padding: 6px 0; }
.vthumb { width: 15px; height: 42px; margin-top: 4px; line-height: 38px; background: linear-gradient(90deg, #f6f6f6, #cfcfcf); }
.vfill { flex: 1; }
.qtabs { height: 17px; padding-left: 2px; }
.qtabs .tab { width: 84px; }
.qscroll { width: 380px; height: 15px; border-left: 3px solid #fff; outline: 1px solid #bbb; background: #eee; display: flex; justify-content: space-between; padding: 1px 7px 0; color: #888; line-height: 13px; }

/* deal window */
.deal { flex: 1; min-height: 0; padding: 0 7px 7px; }
.deal .wtitle { margin: 0 -7px; padding-left: 10px; }
.dbody { flex: 1; min-height: 0; display: flex; background: #000; font: 12px "Open Sans", sans-serif; }
.dwrap { flex: 1; padding: 4px 9px 3px 4px; }
.dpanel { height: 100%; border: 1px solid #70707c; border-radius: 8px; background: #4a4954; padding: 3px 4px 0 3px; display: flex; flex-direction: column; color: #9a98a8; }
.dhead { display: flex; height: 31px; border: 1px solid #a8a6b4; border-radius: 4px 4px 0 0; overflow: hidden; background: linear-gradient(#a4a2b4, #7c7a8a); color: #fff; }
.dhead strong { width: 116px; padding-left: 5px; font-weight: normal; font-size: 19px; line-height: 28px; }
.dd { width: 36px; border: 1px solid #666; border-width: 0 1px; }
.dd svg { width: 12px; height: 7px; }
.clock { flex: 1; display: flex; align-items: center; justify-content: flex-end; gap: 13px; padding-right: 8px; background: linear-gradient(#c4c2ce, #a2a0ae); color: #63636f; font-size: 16px; }
.clock svg { width: 9px; height: 9px; display: block; }
.range { height: 21px; display: grid; grid-template-columns: 1fr 61px 1fr; align-items: center; text-align: center; background: linear-gradient(#f4f4f4, #fff); color: #777; font-size: 12px; }
.range b { background: linear-gradient(#c00000, #800000); color: #fff; border-radius: 2px; font-weight: 600; font-size: 11px; line-height: 15px; }
.tiles { display: grid; grid-template-columns: 1fr 1fr; height: 67px; }
.tile { display: flex; padding: 0 18px 0 5px; border: 1px solid #d04040; color: #fff; }
.tile.r { background: linear-gradient(#c80000, #800000); }
.tile.b { background: linear-gradient(#2044a8, #101c68); border-color: #4a64b4; }
.lead { width: 53px; flex: none; display: flex; flex-direction: column; color: #c8b8c4; font-size: 19px; }
.lead svg { width: 16px; height: 16px; margin: 14px 0 0 9px; }
.lead span { line-height: 34px; }
.tile b { flex: 1; font-size: 46px; font-weight: 500; line-height: 80px; }
.tile sup { font-size: 25px; line-height: 38px; vertical-align: baseline; }
.act { display: flex; justify-content: space-between; height: 37px; flex: none; }
.act button { width: 89px; border: 1px solid #a03030; border-top: 0; border-radius: 0 0 7px 7px; font: bold 18px "Liberation Sans", sans-serif; color: #fff; }
.bsell { background: linear-gradient(#700000, #580000); }
.act .bbuy { background: linear-gradient(#101860, #080c50); border-color: #3448a0; }
.size { flex: 1; padding: 7px 18px 0 16px; border: 1px solid #35343e; border-bottom: 0; border-radius: 7px 7px 0 0; }
.act select { width: 100%; height: 20px; border: 1px solid #333; border-radius: 2px; background: linear-gradient(#fff, #ccc); color: #000; padding-left: 7px; }
.fold { width: 8px; height: 4px; margin: 1px auto 0; flex: none; }
.depthhead { display: grid; grid-template-columns: 1fr 1fr; height: 26px; margin-top: 11px; background: #24232a; border-radius: 3px; line-height: 25px; flex: none; font-size: 11px; }
.depthhead div { display: flex; justify-content: space-between; padding: 0 8px 0 18px; }
.depthhead div:first-child { padding: 0 21px 0 6px; border-right: 1px solid #444; }
.depth { display: grid; grid-template-columns: 1fr 1fr; gap: 6px 24px; padding: 7px 1px 0; }
.depth button, .cmds button { height: 26px; border: 1px solid #2c2b34; border-radius: 3px; box-shadow: inset 0 0 0 1px rgba(255, 255, 255, .2); color: #d4ccd8; font-size: 12px; }
.depth button { display: flex; justify-content: space-between; align-items: center; padding: 0 5px; }
.depth .r, .cmds .r { background: linear-gradient(#c00000, #600000); }
.depth .b, .cmds .b { background: linear-gradient(#2044a8, #0c1860); }
.depth :disabled, .cmds :disabled { background: linear-gradient(#5e5d6a, #4e4d58); border-color: #3c3b46; box-shadow: none; color: #8c8a9a; }
.cmds { display: grid; grid-template-columns: repeat(4, 1fr); gap: 6px; margin-top: 25px; padding: 0 0 0 1px; }
.pos { margin-top: 25px; background: #24232a; line-height: 24px; }
.pos th, .pos td { height: 26px; text-align: center; }
.pos tbody tr { border-top: 2px solid #4a4954; }
.pos td { font-size: 11px; }
.blue { color: #1010e0; }
.white { color: #fff; }
.lime { color: #98f098; }
.rd { color: #e01010; }
.big .vthumb { height: 216px; line-height: 212px; }
.big { width: 16px; padding: 5px 0; }

/* order tracking */
.otc { height: 305px; padding: 0 7px 9px 6px; font-family: "Open Sans", sans-serif; }
.otc .wtitle { padding-top: 7px; }
.filter { height: 30px; display: flex; align-items: center; gap: 7px; background: #f0f0f0; padding-left: 8px; font: 11px "Liberation Sans", sans-serif; overflow: hidden; white-space: nowrap; }
.filter select { width: 121px; height: 20px; border: 1px solid #777; border-radius: 2px; background: linear-gradient(#f4f4f4, #d4d4d4); flex: none; }
.filter input { flex: 1; min-width: 0; height: 19px; background: #fff; padding-left: 1px; margin-left: -2px; }
.filter label[for=start] { margin-left: 3px; }
.obody { flex: 1; min-height: 0; background: #000; overflow: hidden; }
.otable th { height: 21px; background: linear-gradient(#f4f4f4, #d0d0d0); border-right: 1px solid #999; }
.otable td { height: 19px; border: 1px solid #222; border-width: 0 1px 1px 0; background: #141414; color: #c8c8c8; text-align: right; padding-right: 2px; }
.otable .sort svg { width: 10px; height: 9px; margin-right: 7px; }
.otable .last { text-align: left; padding-left: 7px; text-overflow: clip; }
.otable td.last { padding-left: 21px; }
.otable .hl { background: #0000c0; color: #cfe8ff; text-align: left; padding-left: 10px; }
.otable .grp td { background: #003058; color: #78e8f0; text-align: left; padding-left: 6px; }
.grp span { margin-right: 13px; }
.sum { width: 304px; margin-top: 18px; color: #888; }
.sum th, .sum td { height: 19px; border: 1px solid #222; text-align: right; padding-right: 2px; }
.sum th { text-align: left; padding-left: 10px; }
.sum .cap { background: #3a3a3a; color: #b0b0b0; }
.sum .up { background: #00a800; color: #d8ffd8; }
.sum .dn { background: #800000; color: #f0d0d0; }
.otc .thumb { width: 81px; margin: 0; }
.otabs { height: 19px; padding-left: 3px; position: relative; overflow: hidden; }
.otabs .tab { padding: 0 9px; font-size: 9px; font-family: "Liberation Sans", sans-serif; flex: none; }
.more { position: absolute; right: 1px; top: 1px; display: flex; }
.more button { width: 14px; height: 14px; border: 1px solid #888; border-radius: 2px; background: #bbb; line-height: 10px; }

/* status bar */
.status { height: 24px; flex: none; display: flex; align-items: center; background: #f0f0f0; border-top: 1px solid #888; font: 12px Roboto, sans-serif; }
.wtabs { flex: 1; height: 19px; padding-left: 6px; }
.wtabs .tab { width: 147px; height: 17px; font: bold 11px "Liberation Sans", sans-serif; }
.blank { width: 373px; height: 22px; background: #fff; }
.conn { display: flex; align-items: center; gap: 4px; width: 220px; padding-left: 2px; border: 1px solid #ccc; line-height: 17px; white-space: nowrap; }
.conn i { width: 12px; height: 12px; flex: none; border-radius: 50%; background: radial-gradient(circle at 40% 35%, #a8e8ff, #2090e8); }
.status .ico { margin: 0 5px 0 8px; }
.prog { width: 105px; height: 16px; margin-right: 8px; border: 1px solid #999; border-radius: 2px; background: linear-gradient(#eee, #c8c8c8 60%, #ddd); }

.ptr { position: absolute; width: 42px; height: 38px; z-index: 5; pointer-events: none; }
.p1 { right: 2px; top: 351px; }
.p2 { left: 196px; bottom: -23px; }
.p3 { left: 285px; bottom: -22px; }
```
FILE: script.js
```
const NS = 'http://www.w3.org/2000/svg';

// high / low of each one-minute bar, 5px apart
const bars = [
  [413,475],[452,535],[458,483],[423,465],[433,472],[464,507],[471,497],[483,494],[487,563],[537,573],
  [528,560],[474,532],[385,481],[380,400],[380,410],[405,433],[405,431],[420,472],[414,456],[439,481],
  [442,478],[453,472],[464,535],[502,532],[515,567],[543,567],[559,655],[585,646],[572,611],[547,582],
  [553,579],[581,623],[603,636],[610,658],[638,665],[645,668],[660,690],[670,674],[610,674],[585,607],
  [591,633],[559,601],[534,586],[509,560],[509,529],[487,509],[487,494],[449,491],[449,465],[442,453],
  [414,443],[417,497],[236,459],[286,412],[236,313],[243,300],[174,262],[153,240],[176,230],[190,232],
  [185,222],[195,245],[203,240],[198,248],[212,258],[215,262],[185,230],[190,232],[155,206],[161,168],
  [161,165],[164,184],[155,168],[161,165],[163,172],[163,174],[149,175],[174,213],[205,241],[205,244],
  [209,219],[212,225],[199,228],[180,222],[218,285],[240,273],[196,253],[210,282],[210,250],[167,228],
  [155,237],[209,235],[215,260],[212,243],[243,301],[272,289],[275,298],[190,292],[272,336],[468,493],
  [452,509],[455,487],[420,472],[408,462],[417,436],[417,481],[446,494],[477,525],[461,507],[482,529],
  [496,557],[392,525],[375,446],[402,450],[408,428],[427,455],[420,447],[408,437],[398,433],[423,462],
  [455,462],[439,462],[447,481],[480,509],[490,513],[490,522],[520,601],[515,557],[487,532],[449,535]
];

// moving average dots: start x, colour, y values
const avg = [
  [82, '#f00', [418,428,439,450,459,464,465]],
  [117, '#0ff', [465,463,461,459,456,454,453,453]],
  [157, '#f00', [455,459,464,471,481,491,501,510,518,527,537,547,557,567,578,589,599,606,611,614,615]],
  [262, '#0ff', [612,606,599,590,580,568,556,542,530,515,500,484,467,448,429,400,384,364,346,329,312,298,285,274,262,254,244,235,226,217,209,201,194,189,185,184]],
  [442, '#f00', [184,185,187,189,191,195,200,204,208,210,211,211,212,213,216,219,223,229,234,240,250,265,283,301,318,333,348,364,380,394,407,420,430,437,442,445,447,448]],
  [632, '#0ff', [448,447,447,446,446]],
  [657, '#f00', [447,448,451,454,460,465,470,474]]
];

function add(id, tag, attrs, text) {
  const el = document.createElementNS(NS, tag);
  for (const k in attrs) el.setAttribute(k, attrs[k]);
  if (text) el.textContent = text;
  document.getElementById(id).appendChild(el);
}

const clamp = (v, a, b) => Math.max(a, Math.min(b, v));

let d = '';
let prev = bars[0][0] + 20;
bars.forEach(([hi, lo], i) => {
  const x = 48 + i * 5;
  const next = bars[i + 1] || [480, 484];
  const close = Math.round(clamp((next[0] + next[1]) / 2, hi, lo));
  const open = clamp(prev, hi, lo);
  d += `M${x}.5 ${hi}V${lo}M${x - 1} ${open}.5h1M${x + 1} ${close}.5h1`;
  prev = close;
});
add('bars', 'path', { d, stroke: '#00ff00', 'shape-rendering': 'crispEdges' });

avg.forEach(([x, stroke, ys]) => {
  add('avg', 'path', { d: ys.map((y, i) => `M${x - 1 + i * 5} ${y}.5h3`).join(''), stroke, 'stroke-width': 3 });
});

// price scale and grid
const gx = [83,133,183,233,283,333,383,433,483,533,543,563,613,663];
let dots = '', ticks = '';
for (let i = 0; i < 20; i++) {
  const y = Math.round(139 + i * 31.6);
  gx.forEach(x => { dots += `M${x} ${y}.5h1`; });
  ticks += `M809 ${y}.5h4`;
  // the 1.40890 label sits under the order tags
  if (i !== 10) add('axis', 'text', { x: 819, y: y + 4, class: 't' }, (1.4099 - i * 0.0001).toFixed(5));
}
gx.forEach(x => { ticks += `M${x}.5 761v3`; });
for (let x = 48; x < 695; x += 5) ticks += `M${x}.5 761v1`;
add('grid', 'path', { d: dots, stroke: '#555' });
add('axis', 'path', { d: ticks, stroke: '#00b400' });

[[51,'12:33'],[85,'12:40'],[135,'12:50'],[185,'13:00'],[235,'13:10'],[285,'13:20'],[335,'13:30'],[385,'13:40'],
 [435,'13:50'],[485,'14:00'],[565,'15:10'],[615,'15:20'],[665,'15:30']]
  .forEach(([x, t]) => add('axis', 'text', { x, y: 774, class: 't' }, t));

// trade marks
[[458,165,'r','200K @ 1.40967'],[459,179,'r','Sell'],[498,265,'b','Buy'],[498,279,'b','300K @ 1.40990'],
 [609,336,'r','100K @ 1.40903'],[609,350,'r','Sell'],[619,374,'r','100K @ 1.40901'],[619,388,'r','Sell'],
 [613,477,'w','Exit'],[614,491,'w','100K @ 1.40906'],[678,628,'b','Buy'],[678,642,'b','300K @ 1.40870']]
  .forEach(([x, y, c, t]) => add('marks', 'text', { x, y, class: c, 'text-anchor': 'middle' }, t));

[[497,146,'#fff',1],[457,189,'#f00',1],[607,360,'#f00',1],[617,398,'#f00',1],[497,246,'#00f',-1],[612,458,'#fff',-1],[677,610,'#00f',-1]]
  .forEach(([x, y, fill, s]) => add('marks', 'path', { d: `M${x - 2} ${y - 5 * s}h4v${5 * s}h3l-5 ${5 * s}l-5 ${-5 * s}h3z`, fill }));

[[454,212,'#f00'],[604,414,'#f00'],[614,420,'#f00'],[674,518,'#00f']]
  .forEach(([x, y, fill]) => add('marks', 'path', { d: `M${x} ${y - 3}h3l2 2v3l-2 2h-3z`, fill }));
[[502,234],[617,404]].forEach(([x, y]) => add('marks', 'path', { d: `M${x} ${y - 3}h-2l-2 2v3l2 2h2z`, fill: '#fff' }));

// depth ladder
const sizes = { 40895: ['3M', 'ds'], 40893: ['2M', 'ds'], 40892: ['5M', 'z4'], 40881: ['2M', 'z6'], 40879: ['3M', 'db'], 40872: ['5M', 'db'] };
let rows = '';
for (let p = 40904; p >= 40869; p--) {
  const z = p > 40900 ? 'z1' : p > 40894 ? 'z2' : p > 40892 ? 'z3' : p === 40892 ? 'z4' : p > 40881 ? 'z5' : p === 40881 ? 'z6' : p > 40870 ? 'z7' : 'z8';
  const pl = p <= 40881 ? (25 - (40881 - p) * 2).toFixed(2) : '';
  const [size, cls] = sizes[p] || ['', ''];
  rows += `<tr><td class="${pl && 'pl'}">${pl}</td><td class="${z}">${p === 40881 ? '2M &nbsp;' : ''}1.${p}</td><td class="${cls}">${size}</td></tr>`;
}
document.getElementById('ladder').innerHTML = rows;

// quotes
const quotes = [
  ['AUD/JPY','83.525','83.464','3:36:43 PM','-0.061','-0.07%','.d..d..u..','83.464','2,000,000','50.4','83.968','2,000,000','83.359','84.286','83.138'],
  ['EUR/USD','1.40731','1.40882','3:36:43 PM','0.00151','0.11%','u...u..u..','1.40882','2,000,000','0.9','1.40891','2,000,000','1.40409','1.41206','1.40151'],
  ['GBP/JPY','130.483','130.651','3:36:39 PM','0.168','0.13%','d......d.u','130.651','2,000,000','3.9','130.690','2,000,000','130.282','131.208','130.051'],
  ['USD/JPY','81.463','81.686','3:36:40 PM','0.223','0.27%','u..u..d...','81.686','1,000,000','1.1','81.697','2,000,000','81.404','81.899','81.268']
];
document.getElementById('quotes').innerHTML = quotes.map((q, n) => {
  const dir = q[4][0] === '-' ? 'down' : 'up';
  const cls = { 0: 'sym', 2: dir, 4: dir, 5: dir + (n === 3 ? ' focus' : ''), 7: 'bid', 10: 'ask' };
  const cells = q.map((v, i) => i === 6
    ? `<td><div class="trend">${[...v].map(c => `<i class="${c === '.' ? '' : c}"></i>`).join('')}</div></td>`
    : `<td class="${cls[i] || ''}">${v}</td>`).join('');
  return `<tr class="${n === 1 ? 'sel' : ''}"><th>${n + 1}</th>${cells}<td>PFG FOREX</td><td>PFG FOREX</td></tr>`;
}).join('');

// toolbars
const tools = 'open* add* close* save* | bargear wavegear | feed updot orders | sheet dollar sheetbell sheetbar heat | cursor! cursorg tcross keypad zoomin zoomout | widen narrow barplus barminus / shift / bar2! bar1 hl candle line dots area pnf pnf | wingear bell';
document.getElementById('toolbar').innerHTML = tools.split(' ').map(t => {
  if (t === '|') return '<span class="tsep"></span>';
  if (t === '/') return '<span class="tsep tight"></span>';
  const name = t.replace(/[*!]/, '');
  const id = name === 'sheet' || name === 'bar2' ? name : 'i-' + name;
  return `<button class="tb${t.endsWith('*') ? ' wide' : ''}${t.endsWith('!') ? ' on' : ''}" aria-label="${name}"><svg><use href="#${id}"/></svg></button>`;
}).join('');

const side = '| pos pos check ggear x | ray lines gann curve | fib peak ext fan arc vert cycle spiral | gfan | rcirc rbars | rh1 rh2 | chan pchan wedge text | arrow hline vline plus sweep rect';
document.getElementById('sidebar').innerHTML = side.split(' ').map(t => t === '|'
  ? '<span class="lsep"></span>'
  : `<button aria-label="${t}"><svg><use href="#l-${t}"/></svg></button>`).join('') + '<button class="chev">»</button>';
```
